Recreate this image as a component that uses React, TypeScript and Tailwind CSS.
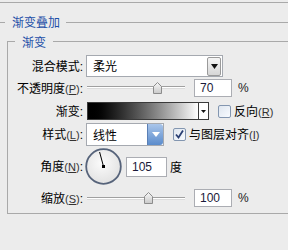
import React from "react";

const CJK = "[font-family:'Noto_Sans_CJK_SC','Noto_Sans',sans-serif]";
const LAT = "[font-family:'Liberation_Sans',Arial,sans-serif]";

function Mn({ k }: { k: string }) {
  return (
    <span className={`${LAT} text-[11px] text-[#333]`}>
      (<span className="underline underline-offset-1">{k}</span>)
    </span>
  );
}

function Label({ text, k }: { text: string; k?: string }) {
  return (
    <div className={`w-[75px] shrink-0 text-right text-[12px] leading-[14px] text-black ${CJK}`}>
      {text}
      {k ? <Mn k={k} /> : null}
      <span className={LAT}>:</span>
    </div>
  );
}

function Thumb() {
  return (
    <svg width="9" height="12" viewBox="0 0 9 12">
      <defs>
        <linearGradient id="tg" x1="0" y1="0" x2="0" y2="1">
          <stop offset="0" stopColor="#f8f8f8" />
          <stop offset="1" stopColor="#c9c9c9" />
        </linearGradient>
      </defs>
      <path d="M0.5 4.5 L4.5 0.5 L8.5 4.5 V11.5 H0.5 Z" fill="url(#tg)" stroke="#8c8c8c" />
    </svg>
  );
}

function Slider({ pos, trackTop }: { pos: number; trackTop: string }) {
  return (
    <div className="relative ml-[4px] h-full w-[98px]">
      <div className={`absolute left-0 right-0 ${trackTop} h-[3px] border-t border-b border-t-[#a0a0a0] border-b-[#dcdcdc] bg-white`} />
      <div className="absolute top-[3px]" style={{ left: pos }}>
        <Thumb />
      </div>
    </div>
  );
}

function NumInput({ v, w = "w-[38px]", h = "h-[18px]" }: { v: string; w?: string; h?: string }) {
  return (
    <div className={`${w} ${h} flex items-center border border-[#abadb3] bg-white pl-[5px] text-[12px] text-[#1a1a3a] ${LAT}`}>
      {v}
    </div>
  );
}

function Check({ checked }: { checked?: boolean }) {
  return (
    <div className="flex h-[13px] w-[13px] items-center justify-center rounded-[2px] border border-[#8396b0] bg-gradient-to-br from-[#dfe6ef] to-[#f8fbff]">
      {checked ? (
        <svg width="11" height="11" viewBox="0 0 11 11">
          <path d="M2 5.5 L4.5 8.5 L9 1.5" fill="none" stroke="#2a3f73" strokeWidth="1.8" />
        </svg>
      ) : null}
    </div>
  );
}

export default function App() {
  return (
    <div className={`h-[250px] w-[288px] overflow-hidden bg-[#ececec] pt-[2px] ${CJK}`}>
      <div className="h-px bg-[#a9a9a9]" />
      {/* outer legend */}
      <div className="mt-[12px] flex h-[14px] items-center">
        <div className="h-px w-[5px] bg-[#a9a9a9]" />
        <span className="pl-[7px] pr-[6px] text-[12px] leading-[14px] text-[#1d4fa8]">渐变叠加</span>
        <div className="h-px flex-1 bg-[#a9a9a9]" />
      </div>
      {/* inner group */}
      <div className="ml-[7px] mt-[12px] flex h-[173px] flex-col border-b border-l border-[#a9a9a9]">
        <div className="-ml-px -mt-[6px] flex h-[13px] items-center">
          <div className="h-px w-[8px] bg-[#a9a9a9]" />
          <span className="pl-[7px] pr-[7px] text-[12px] leading-[13px] text-[#1d4fa8]">渐变</span>
          <div className="h-px flex-1 bg-[#a9a9a9]" />
        </div>

        {/* row 1 */}
        <div className="mt-[7px] flex h-[22px] items-center">
          <Label text="混合模式" />
          <div className="ml-[3px] flex h-[22px] w-[137px] items-center border border-[#a5a9b0] bg-white">
            <span className="flex-1 pl-[6px] text-[12px] text-black">柔光</span>
            <div className="mr-px flex h-[19px] w-[14px] items-center justify-center rounded-[2px] border border-[#9a9a9a] bg-gradient-to-b from-[#f5f5f5] to-[#d6d6d6]">
              <svg width="7" height="5" viewBox="0 0 7 5">
                <path d="M0 0 H7 L3.5 5 Z" fill="#111" />
              </svg>
            </div>
          </div>
        </div>

        {/* row 2 */}
        <div className="mt-[2px] flex h-[18px] items-center">
          <Label text="不透明度" k="P" />
          <Slider pos={66} trackTop="top-[7px]" />
          <div className="ml-[9px]">
            <NumInput v="70" />
          </div>
          <span className={`ml-[6px] text-[12px] text-[#222] ${LAT}`}>%</span>
        </div>

        {/* row 3 */}
        <div className="mt-[5px] flex h-[18px] items-center">
          <Label text="渐变" />
          <div className="ml-[4px] flex h-[18px] w-[122px] border border-[#3a3a3a] bg-white">
            <div className="h-full flex-1 bg-gradient-to-r from-black to-white" />
            <div className="flex h-full w-[10px] items-center justify-center border-l border-[#3a3a3a]">
              <svg width="5" height="3" viewBox="0 0 5 3">
                <path d="M0 0 H5 L2.5 3 Z" fill="#111" />
              </svg>
            </div>
          </div>
          <div className="ml-[9px]">
            <Check />
          </div>
          <span className="ml-[3px] text-[12px] leading-[14px] text-black">
            反向<Mn k="R" />
          </span>
        </div>

        {/* row 4 */}
        <div className="mt-[3px] flex h-[23px] items-center">
          <Label text="样式" k="L" />
          <div className="ml-[3px] flex h-[23px] w-[78px] items-center border border-[#a5a9b0] bg-white">
            <span className="flex-1 pl-[6px] text-[12px] text-black">线性</span>
            <div className="flex h-full w-[16px] items-center justify-center rounded-r-[3px] border-l border-[#5a7fb5] bg-gradient-to-b from-[#a9c5ea] to-[#5b8ccc]">
              <svg width="8" height="5" viewBox="0 0 8 5">
                <path d="M0 0 H8 L4 5 Z" fill="#fff" />
              </svg>
            </div>
          </div>
          <div className="ml-[9px]">
            <Check checked />
          </div>
          <span className="ml-[3px] text-[12px] leading-[14px] text-black">
            与图层对齐<Mn k="I" />
          </span>
        </div>

        {/* row 5 */}
        <div className="mt-[2px] flex h-[37px] items-center">
          <Label text="角度" k="N" />
          <div className="ml-[2px]">
            <svg width="37" height="37" viewBox="0 0 37 37">
              <defs>
                <radialGradient id="dg" cx="0.45" cy="0.4" r="0.6">
                  <stop offset="0" stopColor="#fbfbfb" />
                  <stop offset="1" stopColor="#e2e2e2" />
                </radialGradient>
              </defs>
              <circle cx="18.5" cy="18.5" r="17.3" fill="url(#dg)" stroke="#56637a" strokeWidth="1.8" />
              <line x1="18.5" y1="18.5" x2="14.6" y2="4" stroke="#000" strokeWidth="1" />
              <rect x="17" y="17" width="3" height="3" fill="#000" />
            </svg>
          </div>
          <div className="ml-[4px]">
            <NumInput v="105" w="w-[41px]" h="h-[20px]" />
          </div>
          <span className="ml-[3px] text-[12px] text-black">度</span>
        </div>

        {/* row 6 */}
        <div className="mt-[4px] flex h-[18px] items-center">
          <Label text="缩放" k="S" />
          <Slider pos={57} trackTop="top-[8px]" />
          <div className="ml-[9px]">
            <NumInput v="100" />
          </div>
          <span className={`ml-[6px] text-[12px] text-[#222] ${LAT}`}>%</span>
        </div>
      </div>
    </div>
  );
}
